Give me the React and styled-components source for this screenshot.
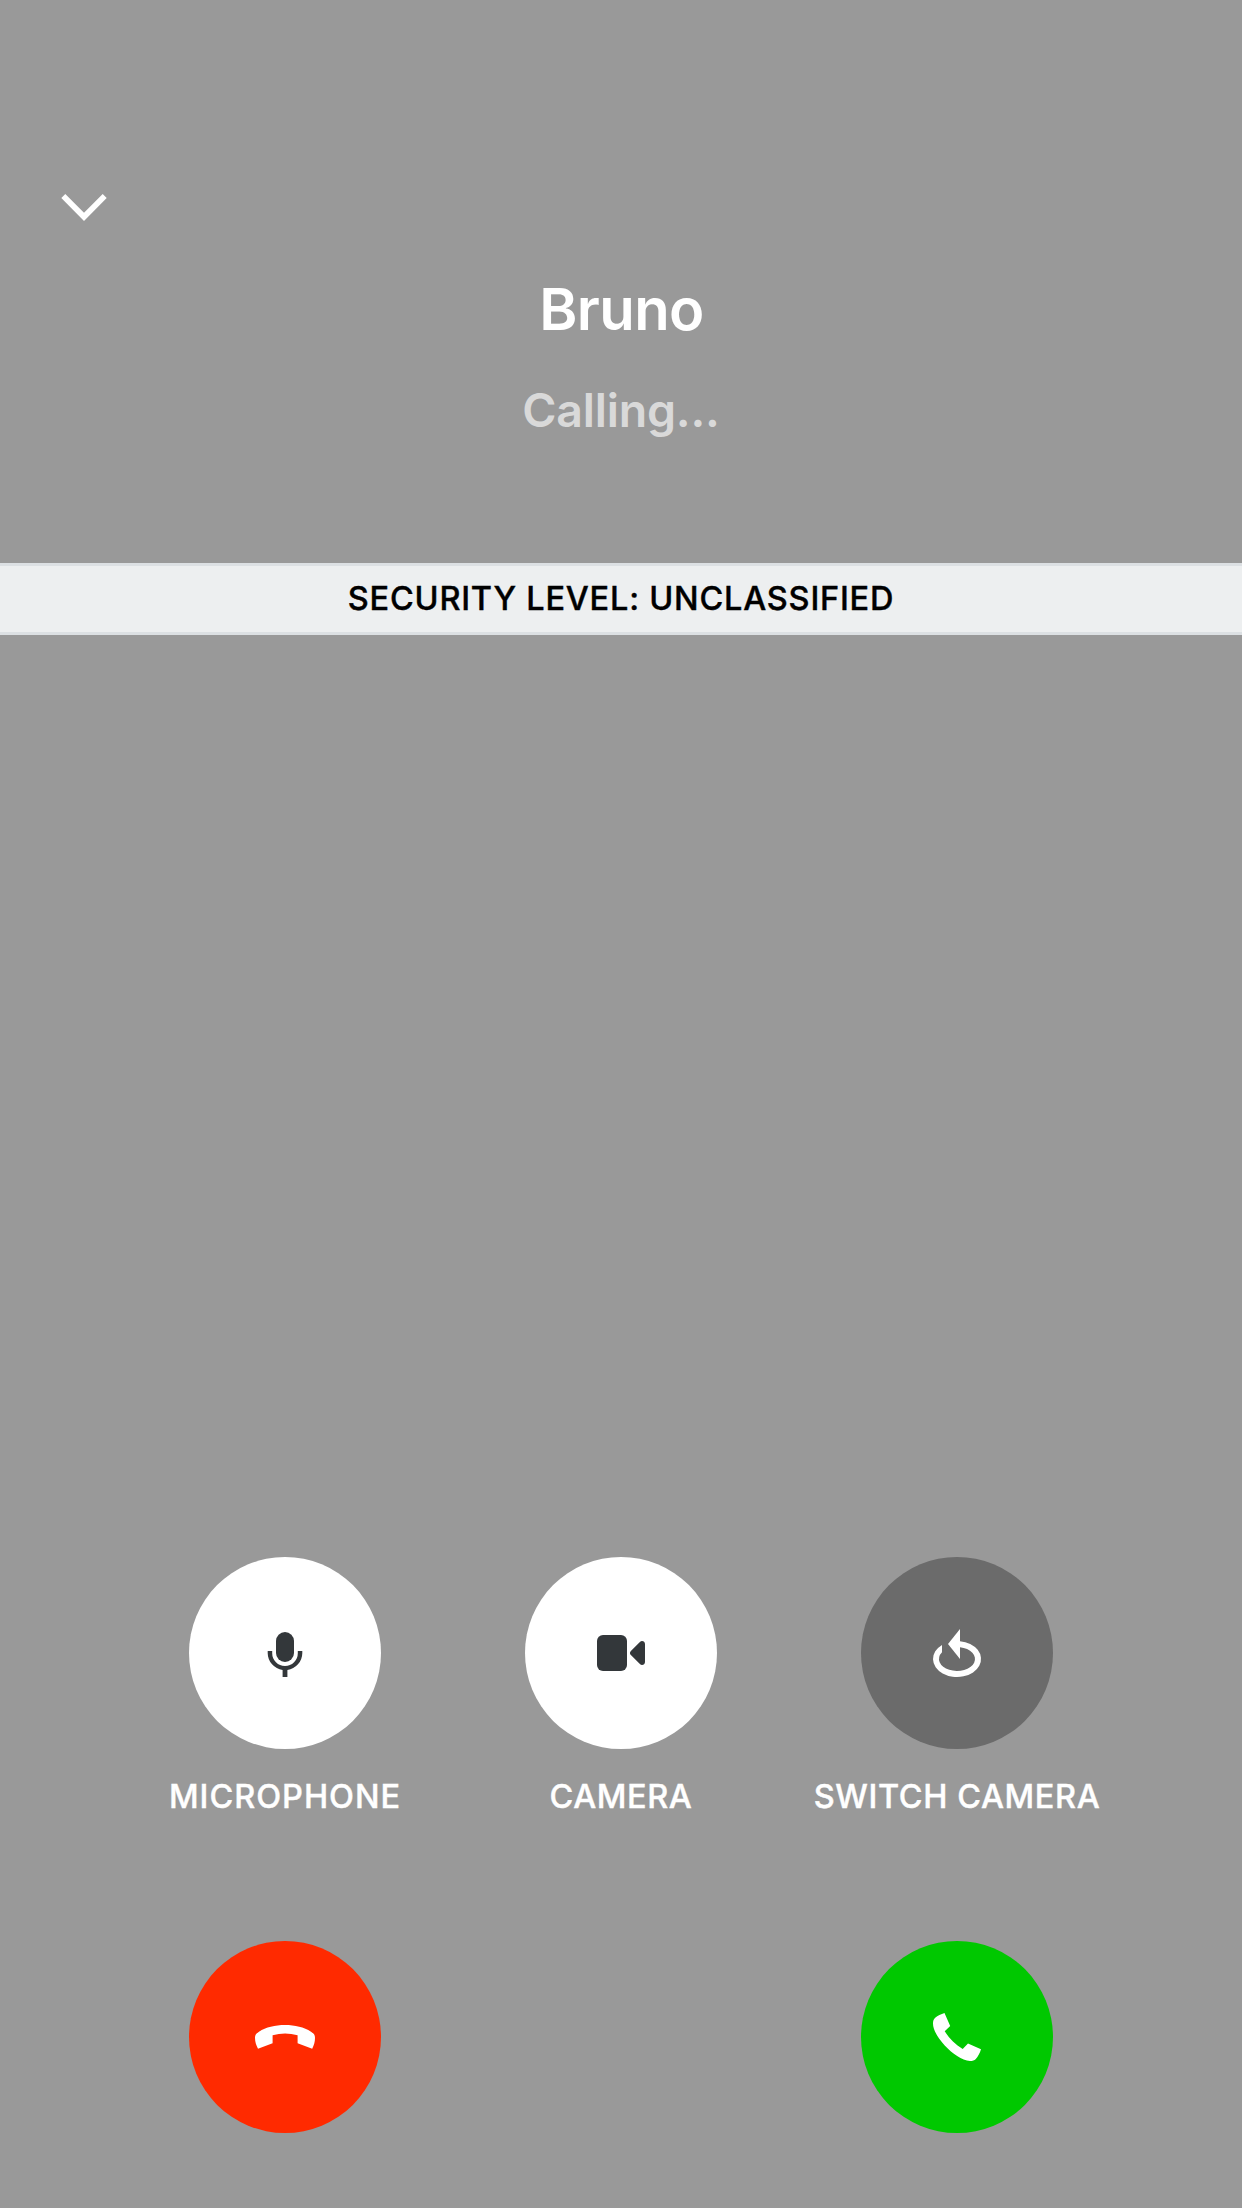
import React from "react";
import styled, { createGlobalStyle } from "styled-components";

const GlobalStyle = createGlobalStyle`
  *, *::before, *::after {
    box-sizing: border-box;
  }
  body {
    margin: 0;
    background: #999999;
    font-family: Inter, "Liberation Sans", sans-serif;
  }
`;

const Screen = styled.main`
  display: flex;
  flex-direction: column;
  width: 1242px;
  height: 2208px;
  overflow: hidden;
  background: #999999;
  color: #ffffff;
`;

const TopBar = styled.header`
  display: flex;
  align-items: flex-end;
  height: 232px;
  padding: 0 0 0 60px;
`;

const PlainButton = styled.button`
  display: flex;
  padding: 0;
  border: 0;
  background: none;
  color: inherit;
`;

const ChevronSvg = styled.svg`
  display: block;
  width: 48px;
  height: 48px;
  fill: currentColor;
`;

const CallInfo = styled.section`
  display: flex;
  flex-direction: column;
  align-items: center;
  height: 331px;
  padding-top: 42px;
`;

const Name = styled.h1`
  margin: 0;
  padding-left: 1px;
  font-size: 58px;
  line-height: 70px;
  font-weight: 600;
  letter-spacing: -0.6px;
`;

const Status = styled.p`
  margin: 38px 0 0;
  font-size: 46.5px;
  line-height: 56px;
  font-weight: 600;
  letter-spacing: -0.2px;
  color: #d9d9d9;
`;

const SecurityBanner = styled.div`
  display: flex;
  align-items: center;
  justify-content: center;
  height: 72px;
  border-top: 3px solid #dce0e3;
  border-bottom: 3px solid #dce0e3;
  background: #edeff0;
  color: #000000;
  font-size: 32.5px;
  line-height: 40px;
  font-weight: 500;
  letter-spacing: 0.78px;
  -webkit-text-stroke: 0.4px currentColor;
`;

const Controls = styled.section`
  display: grid;
  grid-template-columns: repeat(3, 336px);
  grid-template-rows: 384px 192px;
  justify-content: center;
  margin-top: auto;
  padding-bottom: 75px;
`;

const Control = styled.div`
  grid-column: ${(p) => p.$column};
  display: flex;
  flex-direction: column;
  align-items: center;
`;

const RoundButton = styled.button`
  display: flex;
  align-items: center;
  justify-content: center;
  width: 192px;
  height: 192px;
  padding: 0;
  border: 0;
  border-radius: 50%;
  background: ${(p) => p.$background};
  color: ${(p) => p.$color || "#ffffff"};
`;

const Glyph = styled.svg`
  display: block;
  width: 96px;
  height: 96px;
  fill: currentColor;
`;

const Label = styled.span`
  margin-top: 28px;
  font-size: 32.5px;
  line-height: 40px;
  font-weight: 500;
  letter-spacing: ${(p) => p.$tracking};
  white-space: nowrap;
  -webkit-text-stroke: 0.4px currentColor;
`;

const MicrophoneIcon = () => (
  <Glyph viewBox="0 0 96 96">
    <rect x="39" y="27" width="18" height="30" rx="9" />
    <path d="M30.7 46H35.2V48.2A12.8 12.8 0 0 0 60.8 48.2V46H65.3V48.2A17.3 17.3 0 0 1 50.4 65V72H45.6V65A17.3 17.3 0 0 1 30.7 48.2Z" />
  </Glyph>
);

const CameraIcon = () => (
  <Glyph viewBox="0 0 96 96">
    <rect x="24" y="30" width="30" height="36" rx="6" />
    <path d="M57.9 45.9L66.9 36.9C68.8 35 72 36.3 72 39V57C72 59.7 68.8 61 66.9 59.1L57.9 50.1C56.7 48.9 56.7 47.1 57.9 45.9Z" />
  </Glyph>
);

const SwitchIcon = () => (
  <Glyph viewBox="0 0 96 96">
    <path d="M33 39.95A24 18 0 1 0 51 36.14V42.17A18 12 0 1 1 33 47.37Z" />
    <path d="M51 24V54L39 39Z" />
  </Glyph>
);

const HangUpIcon = () => (
  <Glyph viewBox="0 0 96 96">
    <path d="M21 59.8L35.6 54.3V46.3Q48 42.6 60.6 46.3V54.3L75.2 59.8C77 56 78 53 78 48.7C78 46 77 44.6 74 42.7C67 38.2 58 36 48 36C38 36 29 38.2 22 42.7C19 44.6 18 46 18 48.7C18 53 19.2 56 21 59.8Z" />
  </Glyph>
);

const AcceptIcon = () => (
  <Glyph viewBox="0 0 96 96">
    <path d="M35.5 24L41.2 37L35.7 42.3C40.3 49.5 46.3 55.6 53.7 60L59 54.6L72 60.3C71 63.8 69 67.6 66.8 70C65.4 71.5 63.5 72 61 72C53 71.5 43.3 64.6 35.5 56.2C28.5 48.6 24 40.5 24 34.5C24 32 24.5 30.4 26.2 28.8C28.6 26.7 32 25 35.5 24Z" />
  </Glyph>
);

export default function App() {
  return (
    <>
      <GlobalStyle />
      <Screen>
        <TopBar>
          <PlainButton aria-label="Minimize">
            <ChevronSvg viewBox="0 0 48 48">
              <path d="M5.3 10L24 28.7L42.7 10L46.7 14L24 36.9L1.3 14Z" />
            </ChevronSvg>
          </PlainButton>
        </TopBar>
        <CallInfo>
          <Name>Bruno</Name>
          <Status>Calling...</Status>
        </CallInfo>
        <SecurityBanner>SECURITY LEVEL: UNCLASSIFIED</SecurityBanner>
        <Controls>
          <Control $column={1}>
            <RoundButton $background="#ffffff" $color="#33373a" aria-label="Microphone">
              <MicrophoneIcon />
            </RoundButton>
            <Label $tracking="0.96px">MICROPHONE</Label>
          </Control>
          <Control $column={2}>
            <RoundButton $background="#ffffff" $color="#33373a" aria-label="Camera">
              <CameraIcon />
            </RoundButton>
            <Label $tracking="0.58px">CAMERA</Label>
          </Control>
          <Control $column={3}>
            <RoundButton $background="#6b6b6b" aria-label="Switch camera">
              <SwitchIcon />
            </RoundButton>
            <Label $tracking="0.6px">SWITCH CAMERA</Label>
          </Control>
          <Control $column={1}>
            <RoundButton $background="#ff2a00" aria-label="Hang up">
              <HangUpIcon />
            </RoundButton>
          </Control>
          <Control $column={3}>
            <RoundButton $background="#00c800" aria-label="Accept">
              <AcceptIcon />
            </RoundButton>
          </Control>
        </Controls>
      </Screen>
    </>
  );
}
